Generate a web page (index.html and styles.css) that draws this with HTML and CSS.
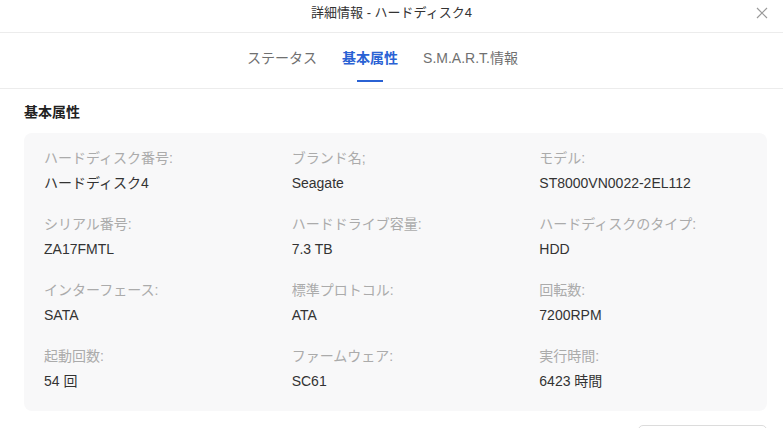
FILE: index.html
```html
<!DOCTYPE html>
<html lang="ja">
<head>
<meta charset="utf-8">
<link rel="stylesheet" href="styles.css">
</head>
<body>
<div class="dialog">
  <header class="titlebar">
    <span class="title">詳細情報 - ハードディスク4</span>
    <svg class="close" width="12" height="12" viewBox="0 0 12 12"><path d="M1 1L11 11M11 1L1 11" stroke="#9a9a9a" stroke-width="1.2" fill="none"/></svg>
  </header>
  <nav class="tabs">
    <div class="tab"><span>ステータス</span><i class="bar"></i></div>
    <div class="tab active"><span>基本属性</span><i class="bar"></i></div>
    <div class="tab"><span>S.M.A.R.T.情報</span><i class="bar"></i></div>
  </nav>
  <section class="content">
    <h2 class="heading">基本属性</h2>
    <div class="card">
      <div class="item"><div class="label">ハードディスク番号:</div><div class="value">ハードディスク4</div></div>
      <div class="item"><div class="label">ブランド名;</div><div class="value">Seagate</div></div>
      <div class="item"><div class="label">モデル:</div><div class="value">ST8000VN0022-2EL112</div></div>
      <div class="item"><div class="label">シリアル番号:</div><div class="value">ZA17FMTL</div></div>
      <div class="item"><div class="label">ハードドライブ容量:</div><div class="value">7.3 TB</div></div>
      <div class="item"><div class="label">ハードディスクのタイプ:</div><div class="value">HDD</div></div>
      <div class="item"><div class="label">インターフェース:</div><div class="value">SATA</div></div>
      <div class="item"><div class="label">標準プロトコル:</div><div class="value">ATA</div></div>
      <div class="item"><div class="label">回転数:</div><div class="value">7200RPM</div></div>
      <div class="item"><div class="label">起動回数:</div><div class="value">54 回</div></div>
      <div class="item"><div class="label">ファームウェア:</div><div class="value">SC61</div></div>
      <div class="item"><div class="label">実行時間:</div><div class="value">6423 時間</div></div>
    </div>
    <div class="actions"><button class="btn" type="button"></button></div>
  </section>
</div>
</body>
</html>
```
FILE: styles.css
```css
* { box-sizing: border-box; }
html, body { margin: 0; padding: 0; background: #fff; }
body {
  font-family: "Liberation Sans", "Noto Sans CJK JP", sans-serif;
  color: #333;
  width: 783px;
  height: 428px;
  overflow: hidden;
}
.titlebar {
  height: 33px;
  border-bottom: 1px solid #ececec;
  display: flex;
  align-items: center;
  justify-content: center;
  position: relative;
}
.title {
  font-size: 13px;
  color: #333;
  line-height: 18px;
  margin-top: -7px;
}
.close {
  position: absolute;
  right: 15px;
  top: 7px;
}
.tabs {
  height: 56px;
  border-bottom: 1px solid #ececec;
  display: flex;
  justify-content: center;
  gap: 25px;
  padding-right: 18px;
}
.tab {
  display: flex;
  flex-direction: column;
  align-items: center;
  padding-top: 15px;
  gap: 12px;
  font-size: 14px;
  line-height: 20px;
  color: #707070;
}
.tab .bar {
  display: block;
  width: 26px;
  height: 2px;
  background: transparent;
}
.tab.active { color: #2a62d4; font-weight: bold; }
.tab.active .bar { background: #2a62d4; }
.content {
  padding: 0 16px 0 24px;
}
.heading {
  margin: 13px 0 0;
  font-size: 14px;
  line-height: 20px;
  font-weight: bold;
  color: #222;
}
.card {
  margin-top: 11px;
  background: #f8f8f9;
  border-radius: 8px;
  padding: 16px 0 21px;
  display: grid;
  grid-template-columns: repeat(3, 1fr);
  row-gap: 23px;
}
.item {
  padding-left: 20px;
  display: flex;
  flex-direction: column;
  gap: 7px;
}
.label {
  font-size: 14px;
  line-height: 18px;
  color: #ababab;
}
.value {
  font-size: 14px;
  line-height: 18px;
  color: #333;
}
.actions {
  margin-top: 14px;
  display: flex;
  justify-content: flex-end;
}
.btn {
  width: 129px;
  height: 32px;
  border: 1px solid #dcdcdc;
  border-radius: 5px;
  background: #fff;
}
```
